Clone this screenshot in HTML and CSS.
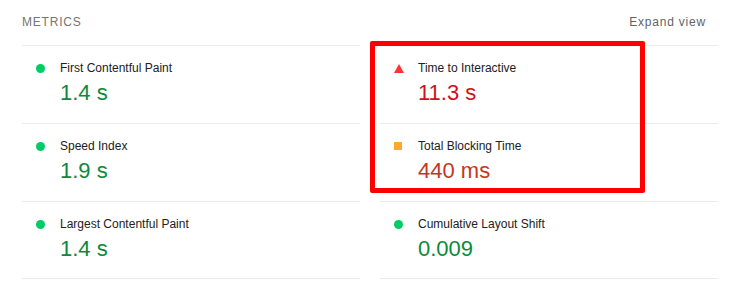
FILE: index.html
```html
<!DOCTYPE html>
<html lang="en">
<head>
    <meta charset="UTF-8">
    <meta name="viewport" content="width=device-width, initial-scale=1.0">
    <title>Metrics</title>
    <link rel="stylesheet" href="styles.css">
</head>
<body>
    <div class="metrics">
        <div class="metrics-header">
            <span class="metrics-title">Metrics</span>
            <a class="expand-link" href="#">Expand view</a>
        </div>

        <div class="metrics-grid">
            <div class="metric">
                <div class="metric-label"><span class="icon icon-pass"></span>First Contentful Paint</div>
                <div class="metric-value pass">1.4 s</div>
            </div>
            <div class="metric">
                <div class="metric-label">
                    <svg class="icon" width="10" height="9" viewBox="0 0 10 9"><polygon points="5,0 10,9 0,9" fill="#ff3333"/></svg>Time to Interactive
                </div>
                <div class="metric-value fail">11.3 s</div>
            </div>
            <div class="metric">
                <div class="metric-label"><span class="icon icon-pass"></span>Speed Index</div>
                <div class="metric-value pass">1.9 s</div>
            </div>
            <div class="metric">
                <div class="metric-label"><span class="icon icon-average"></span>Total Blocking Time</div>
                <div class="metric-value average">440 ms</div>
            </div>
            <div class="metric">
                <div class="metric-label"><span class="icon icon-pass"></span>Largest Contentful Paint</div>
                <div class="metric-value pass">1.4 s</div>
            </div>
            <div class="metric">
                <div class="metric-label"><span class="icon icon-pass"></span>Cumulative Layout Shift</div>
                <div class="metric-value pass">0.009</div>
            </div>
        </div>

        <!-- recuadro rojo de la captura -->
        <div class="highlight"></div>
    </div>
</body>
</html>
```

FILE: styles.css
```css
body {
    font-family: "Liberation Sans", Arial, sans-serif;
    margin: 0;
    padding: 0;
    background-color: #fff;
}

.metrics {
    position: relative;
    margin: 0 14px 0 22px;
}

.metrics-header {
    display: flex;
    justify-content: space-between;
    align-items: center;
    padding: 14px 12px 15px 0;
    line-height: 16px;
}

.metrics-title {
    font-size: 12px;
    letter-spacing: 0.8px;
    text-transform: uppercase;
    color: #757575;
}

.expand-link {
    font-size: 12px;
    letter-spacing: 0.8px;
    color: #5f6368;
    text-decoration: none;
}

.metrics-grid {
    display: grid;
    grid-template-columns: 1fr 1fr;
    column-gap: 20px;
}

.metric {
    padding: 13px 0 17px 14px;
    border-bottom: 1px solid #ebebeb;
}

.metric:nth-child(-n+2) {
    border-top: 1px solid #ebebeb;
}

.metric:nth-child(n+5) {
    padding-bottom: 16px;
}

.metric-label {
    display: flex;
    align-items: center;
    font-size: 12px;
    line-height: 18px;
    color: #212121;
}

.icon {
    display: inline-block;
    flex: none;
    margin-right: 14px;
}

.icon-pass {
    width: 9px;
    height: 9px;
    margin-right: 15px;
    border-radius: 50%;
    background-color: #00cc66;
}

.icon-average {
    width: 8px;
    height: 8px;
    margin-right: 16px;
    background-color: #ffa733;
}

.metric-value {
    margin-top: 3px;
    margin-left: 24px;
    font-size: 22px;
    line-height: 26px;
}

.pass {
    color: #0b8a3a;
}

.fail {
    color: #d1101a;
}

.average {
    color: #c3381c;
}

.highlight {
    position: absolute;
    left: 348px;
    top: 41px;
    width: 265px;
    height: 142px;
    border: 5px solid #ff0000;
    border-radius: 2px;
}
```
